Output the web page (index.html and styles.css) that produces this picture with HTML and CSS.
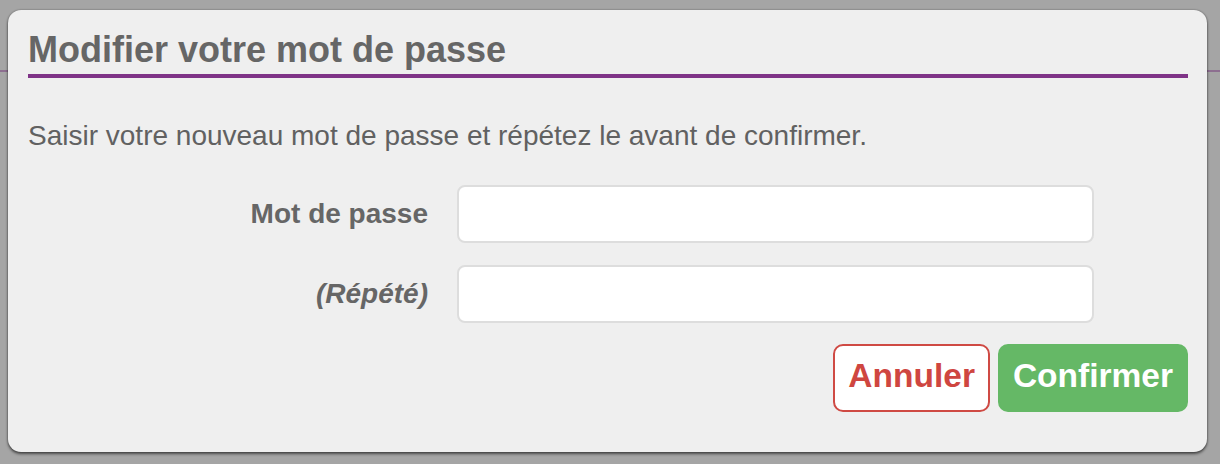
FILE: index.html
```html
<!DOCTYPE html>
<html lang="fr">
<head>
<meta charset="utf-8">
<title>Modifier votre mot de passe</title>
<link rel="stylesheet" href="styles.css">
</head>
<body>
<div class="dialog">
  <h1 class="dialog-title">Modifier votre mot de passe</h1>
  <p class="dialog-text">Saisir votre nouveau mot de passe et répétez le avant de confirmer.</p>
  <form class="form">
    <div class="row">
      <label class="label" for="pw1">Mot de passe</label>
      <input class="input" id="pw1" type="password">
    </div>
    <div class="row">
      <label class="label label-italic" for="pw2">(Répété)</label>
      <input class="input" id="pw2" type="password">
    </div>
    <div class="actions">
      <button type="button" class="btn btn-cancel">Annuler</button>
      <button type="button" class="btn btn-confirm">Confirmer</button>
    </div>
  </form>
</div>
</body>
</html>
```

FILE: styles.css
```css
html, body {
  margin: 0;
  padding: 0;
}

body {
  width: 1220px;
  height: 464px;
  overflow: hidden;
  background:
    linear-gradient(to bottom, transparent 70px, #8d6f90 70px, #8d6f90 72px, transparent 72px),
    #a5a5a5;
  font-family: "Liberation Sans", Arial, Helvetica, sans-serif;
}

.dialog {
  box-sizing: border-box;
  width: 1199px;
  height: 442px;
  margin: 10px 0 0 8px;
  padding: 20px 19px 40px 20px;
  background: #efefef;
  border-radius: 13px;
  box-shadow: 0 2px 3px rgba(0, 0, 0, 0.55), 0 0 2px rgba(0, 0, 0, 0.4);
}

.dialog-title {
  margin: 0;
  padding: 0 0 4px 0;
  font-size: 36px;
  line-height: 40px;
  font-weight: bold;
  color: #666666;
  border-bottom: 4px solid #7f3387;
}

.dialog-text {
  margin: 42px 0 0 0;
  font-size: 28px;
  line-height: 32px;
  color: #616161;
}

.form {
  margin: 33px 0 0 0;
}

.row {
  display: flex;
  align-items: center;
  margin-bottom: 22px;
}

.label {
  width: 400px;
  flex: none;
  text-align: right;
  font-size: 28px;
  line-height: 32px;
  font-weight: bold;
  color: #666666;
}

.label-italic {
  font-style: italic;
}

.input {
  box-sizing: border-box;
  width: 637px;
  height: 58px;
  margin: 0 0 0 29px;
  border: 2px solid #dddddd;
  border-radius: 8px;
  background: #ffffff;
  outline: none;
  font-size: 28px;
}

.actions {
  display: flex;
  justify-content: flex-end;
  gap: 8px;
  margin-top: -1px;
}

.btn {
  box-sizing: border-box;
  height: 68px;
  padding: 10px 13px 14px;
  border: 2px solid;
  border-radius: 10px;
  font-family: "Liberation Sans", Arial, Helvetica, sans-serif;
  font-size: 33.5px;
  line-height: 40px;
  font-weight: bold;
  cursor: pointer;
}

.btn-cancel {
  background: #ffffff;
  border-color: #cf4a44;
  color: #cf4640;
}

.btn-confirm {
  background: #65b866;
  border-color: #65b866;
  color: #ffffff;
}
```
